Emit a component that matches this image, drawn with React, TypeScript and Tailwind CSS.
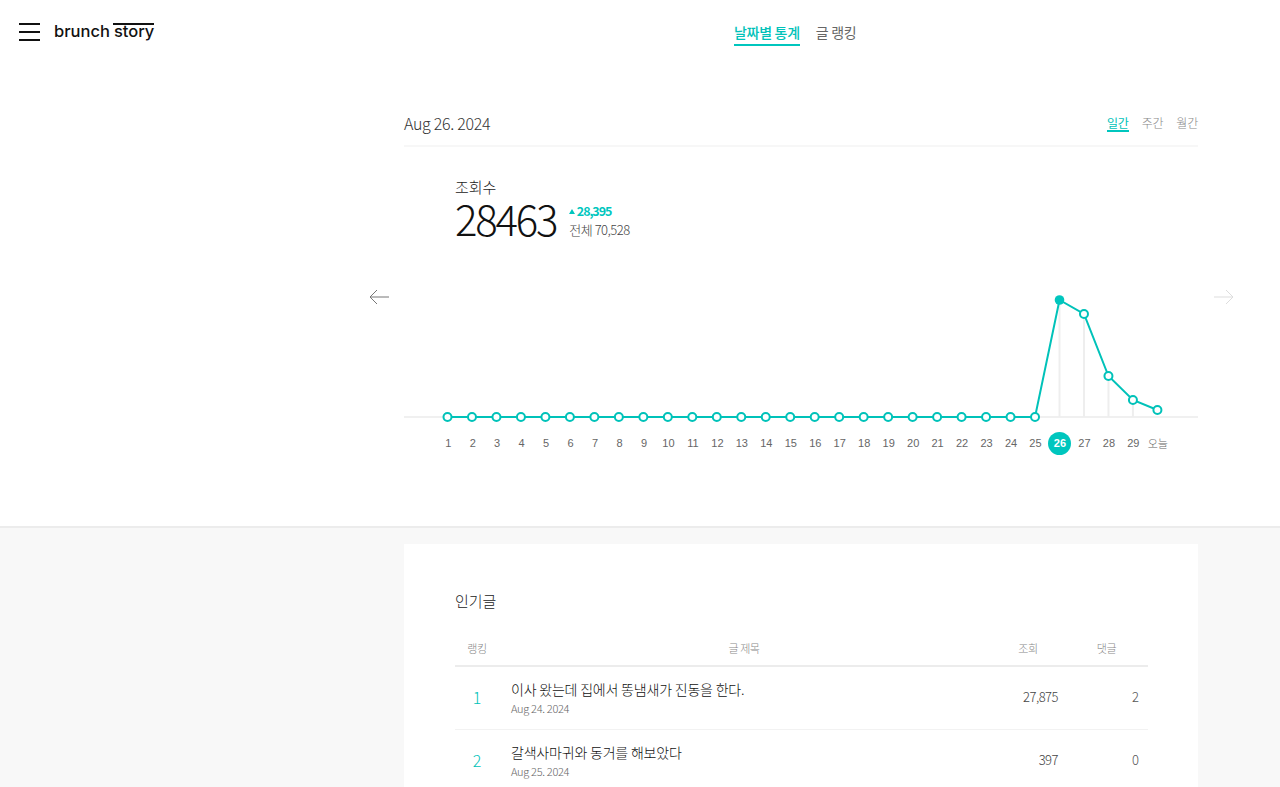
const FONT = "font-['Noto_Sans_CJK_KR','Noto_Sans',sans-serif]";

const days = Array.from({ length: 29 }, (_, i) => i + 1);
const X0 = 43.5;
const STEP = 24.48;
const BASE = 137;
const peaks: Record<number, number> = { 26: 20, 27: 34, 28: 96, 29: 120, 30: 130 };

const points = [...days, 30].map((d) => ({
  d,
  x: X0 + (d - 1) * STEP,
  y: peaks[d] ?? BASE,
}));

function Logo() {
  return (
    <div className="flex items-baseline font-['Inter',sans-serif] text-[16.5px] font-medium leading-[20px] text-[#111]">
      <span>brunch</span>
      <span className="relative ml-[4px]">
        story
        <span className="absolute -left-[1px] right-0 top-[2px] h-[2px] bg-[#111]" />
      </span>
    </div>
  );
}

function Chart() {
  return (
    <svg width="794" height="150" className="block">
      <line x1="0" y1={BASE} x2="794" y2={BASE} stroke="#f0f0f0" strokeWidth="2" />
      {points
        .filter((p) => p.d > 25 && p.d < 30)
        .map((p) => (
          <line key={p.d} x1={p.x} y1={p.y} x2={p.x} y2={BASE} stroke="#eeeeee" strokeWidth="2" />
        ))}
      <polyline
        points={points.map((p) => `${p.x},${p.y}`).join(" ")}
        fill="none"
        stroke="#00c2b9"
        strokeWidth="2"
      />
      {points.map((p) => (
        <circle
          key={p.d}
          cx={p.x}
          cy={p.y}
          r={p.d === 26 ? 4.8 : 4}
          fill={p.d === 26 ? "#00c6be" : "#fff"}
          stroke="#00c2b9"
          strokeWidth={p.d === 26 ? 0 : 2}
        />
      ))}
    </svg>
  );
}

function DayLabels() {
  return (
    <div className="flex pl-[32px] mt-[2px] text-[11px] leading-[23px] text-[#666] font-['Liberation_Sans',sans-serif]">
      {days.map((d) =>
        d === 26 ? (
          <div key={d} className="w-[24.48px] flex justify-center">
            <span className="shrink-0 w-[23px] h-[23px] rounded-full bg-[#00c6be] text-white font-bold text-center">{d}</span>
          </div>
        ) : (
          <div key={d} className="w-[24.48px] text-center">{d}</div>
        ),
      )}
      <div className={`w-[24.48px] text-center whitespace-nowrap flex justify-center ${FONT}`}>오늘</div>
    </div>
  );
}

function Arrow({ dir, color }: { dir: "left" | "right"; color: string }) {
  const d = dir === "left" ? "M20 8H1M8 1 1 8l7 7" : "M0 8h19M12 1l7 7-7 7";
  return (
    <svg width="20" height="16" viewBox="0 0 20 16" fill="none" stroke={color} strokeWidth="1">
      <path d={d} />
    </svg>
  );
}

const rows = [
  { rank: 1, title: "이사 왔는데 집에서 똥냄새가 진동을 한다.", date: "Aug 24. 2024", views: "27,875", comments: 2 },
  { rank: 2, title: "갈색사마귀와 동거를 해보았다", date: "Aug 25. 2024", views: "397", comments: 0 },
];

export default function App() {
  return (
    <div className={`h-screen overflow-hidden bg-white font-light ${FONT}`}>
      <header className="relative h-[64px] flex items-center gap-[16px] pl-[734px] text-[14px] -tracking-[0.3px]">
        <div className="absolute left-[19px] top-[21px] flex items-center gap-[14px] tracking-normal">
          <div className="w-[21px] flex flex-col gap-[6px] mt-[1px]">
            <span className="h-[2px] bg-[#111]" />
            <span className="h-[2px] bg-[#111]" />
            <span className="h-[2px] bg-[#111]" />
          </div>
          <Logo />
        </div>
        <a className="text-[#00c2b9] font-medium border-b-2 border-[#00c6be] leading-[24px] h-[26px] mt-[1px]">날짜별 통계</a>
        <a className="text-[#666] font-normal leading-[24px] h-[26px] mt-[1px]">글 랭킹</a>
      </header>

      <section className="h-[464px] border-b-2 border-[#ececec]">
        <div className="w-[794px] ml-[404px]">
          <div className="flex items-center justify-between h-[83px] pt-[36px] border-b-2 border-[#f7f7f7]">
            <span className="text-[16px] text-[#333] -tracking-[0.3px]">Aug 26. 2024</span>
            <div className="flex gap-[13px] mt-[2px] text-[12px] text-[#888] -tracking-[0.2px]">
              <span className="text-[#00c2b9] font-normal border-b-2 border-[#00c6be] leading-[15px]">일간</span>
              <span className="leading-[15px]">주간</span>
              <span className="leading-[15px]">월간</span>
            </div>
          </div>

          <div className="pl-[51px] pt-[29px]">
            <div className="text-[15px] leading-[22px] text-[#222]">조회수</div>
            <div className="flex items-start gap-[13px]">
              <span className="text-[42px] leading-[40px] font-extralight text-[#111] -tracking-[2.2px]">28463</span>
              <div className="flex flex-col pt-[4px]">
                <span className="flex items-center gap-[1.5px] text-[12.5px] leading-[18px] font-bold text-[#00c6be] -tracking-[1.1px]">
                  <span className="w-0 h-0 border-l-[3px] border-r-[3px] border-b-[5px] border-l-transparent border-r-transparent border-b-[#00c6be]" />
                  28,395
                </span>
                <span className="text-[13px] leading-[20px] text-[#444] -tracking-[0.5px]">전체 70,528</span>
              </div>
            </div>
          </div>

          <div className="relative mt-[40px]">
            <div className="absolute -left-[35px] top-[9px]">
              <Arrow dir="left" color="#777" />
            </div>
            <div className="absolute left-[810px] top-[9px]">
              <Arrow dir="right" color="#ddd" />
            </div>
            <Chart />
            <DayLabels />
          </div>
        </div>
      </section>

      <section className="bg-[#f8f8f8] pt-[16px] h-full">
        <div className="w-[794px] ml-[404px] bg-white pl-[51px] pr-[50px] pt-[46px] pb-10">
          <h2 className="text-[15px] leading-[22px] text-[#222]">인기글</h2>
          <div className="flex items-center h-[40px] pt-[4px] mt-[15px] border-b-2 border-[#ececec] text-[11px] text-[#888] -tracking-[0.4px]">
            <span className="w-[44px] text-center">랭킹</span>
            <span className="w-[490px] text-center">글 제목</span>
            <span className="w-[78px] text-center">조회</span>
            <span className="w-[79px] text-center">댓글</span>
          </div>
          {rows.map((r) => (
            <div key={r.rank} className="flex items-center h-[63px] pb-[2px] border-b border-[#f2f2f2]">
              <span className="w-[44px] text-center text-[16px] text-[#00c2b9]">{r.rank}</span>
              <div className="w-[460px] ml-[12px]">
                <div className="text-[14px] leading-[20px] text-[#111] -tracking-[0.2px]">{r.title}</div>
                <div className="text-[11px] leading-[16px] mt-[1px] text-[#666] -tracking-[0.3px]">{r.date}</div>
              </div>
              <span className="w-[87px] text-right text-[13px] text-[#444] -tracking-[0.5px]">{r.views}</span>
              <span className="w-[81px] text-right text-[13px] text-[#555]">{r.comments}</span>
            </div>
          ))}
        </div>
      </section>
    </div>
  );
}
